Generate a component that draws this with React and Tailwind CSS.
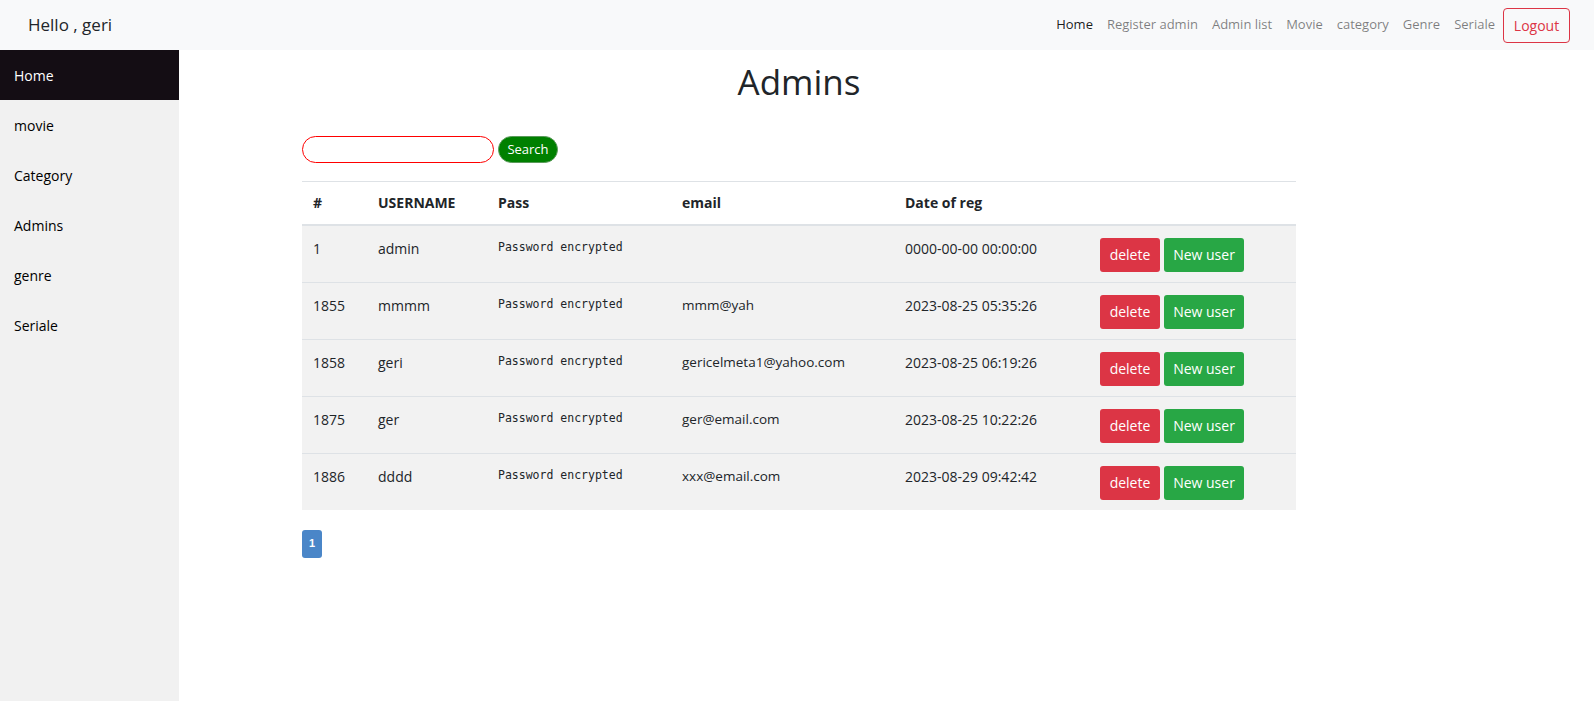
const navLinks = ["Register admin", "Admin list", "Movie", "category", "Genre", "Seriale"];
const sideLinks = ["Home", "movie", "Category", "Admins", "genre", "Seriale"];

const admins = [
  { id: "1", user: "admin", email: "", date: "0000-00-00 00:00:00" },
  { id: "1855", user: "mmmm", email: "mmm@yah", date: "2023-08-25 05:35:26" },
  { id: "1858", user: "geri", email: "gericelmeta1@yahoo.com", date: "2023-08-25 06:19:26" },
  { id: "1875", user: "ger", email: "ger@email.com", date: "2023-08-25 10:22:26" },
  { id: "1886", user: "dddd", email: "xxx@email.com", date: "2023-08-29 09:42:42" },
];

export default function App() {
  return (
    <div className="min-h-[701px] bg-white text-[#212529] font-['Segoe_UI','Open_Sans',sans-serif]">
      <nav className="h-[50px] bg-[#f8f9fa] flex items-center justify-between pl-[28px] pr-[24px]">
        <span className="text-[17px] text-[#212529]">Hello , geri</span>
        <div className="flex items-center text-[13px]">
          <a className="px-[7px] text-black/90">Home</a>
          {navLinks.map((l) => (
            <a key={l} className="px-[7px] text-black/50">
              {l}
            </a>
          ))}
          <button className="ml-[1px] h-[35px] w-[67px] rounded-[4px] border border-[#dc3545] text-[#dc3545] text-[14px]">
            Logout
          </button>
        </div>
      </nav>

      <div className="flex">
        <aside className="w-[179px] h-[651px] bg-[#f1f1f1] text-[14px]">
          {sideLinks.map((l, i) => (
            <div
              key={l}
              className={`h-[50px] flex items-center px-[14px] ${i === 0 ? "bg-[#140d14] text-white" : "text-black"}`}
            >
              {l}
            </div>
          ))}
        </aside>

        <main className="flex-1 pl-[123px]">
          <div className="w-[994px]">
            <h1 className="mt-[10px] text-center text-[35px] leading-[43px] font-normal text-[#212529]">Admins</h1>

            <form className="mt-[33px] flex items-center gap-[4px]" onSubmit={(e) => e.preventDefault()}>
              <input className="w-[192px] h-[27px] rounded-full border border-[#ff0000] px-3 text-[13px] outline-none" />
              <button className="h-[27px] w-[60px] rounded-full bg-[#008000] border border-[#5a9a5a] text-white text-[13px]">
                Search
              </button>
            </form>

            <table className="mt-[18px] w-full border-collapse text-[14px] table-fixed">
              <colgroup>
                <col className="w-[65px]" />
                <col className="w-[120px]" />
                <col className="w-[184px]" />
                <col className="w-[223px]" />
                <col className="w-[194px]" />
                <col className="w-[208px]" />
              </colgroup>
              <thead>
                <tr className="border-t border-b-2 border-t-[#dee2e6] border-b-[#dee2e6] text-left">
                  <th className="px-[11px] h-[43px] font-bold">#</th>
                  <th className="px-[11px] font-bold">USERNAME</th>
                  <th className="px-[11px] font-bold">Pass</th>
                  <th className="px-[11px] font-bold">email</th>
                  <th className="px-[11px] font-bold">Date of reg</th>
                  <th className="px-[11px]"></th>
                </tr>
              </thead>
              <tbody>
                {admins.map((a, i) => (
                  <tr key={a.id} className={`bg-[#f2f2f2] ${i > 0 ? "border-t border-[#dee2e6]" : ""}`}>
                    <td className="px-[11px] pt-[12px] align-top leading-[21px]">{a.id}</td>
                    <td className="px-[11px] pt-[12px] align-top leading-[21px]">{a.user}</td>
                    <td className="px-[11px] pt-[11px] align-top leading-[21px] font-['DejaVu_Sans_Mono',monospace] text-[11.5px]">
                      Password encrypted
                    </td>
                    <td className="px-[11px] pt-[12px] align-top leading-[21px] text-[13.5px]">{a.email}</td>
                    <td className="px-[11px] pt-[12px] align-top leading-[21px]">{a.date}</td>
                    <td className="px-[12px] pt-[12px] pb-[10px] align-top">
                      <div className="flex gap-[4px]">
                        <button className="h-[34px] w-[60px] rounded-[3px] bg-[#dc3545] text-white text-[14px]">delete</button>
                        <button className="h-[34px] w-[80px] rounded-[3px] bg-[#28a745] text-white text-[14px]">New user</button>
                      </div>
                    </td>
                  </tr>
                ))}
              </tbody>
            </table>

            <div className="mt-[20px] flex">
              <span className="w-[20px] h-[28px] rounded-[3px] bg-[#4a86c8] text-white text-[11px] font-bold flex items-center justify-center font-['Liberation_Sans',sans-serif]">
                1
              </span>
            </div>
          </div>
        </main>
      </div>
    </div>
  );
}
